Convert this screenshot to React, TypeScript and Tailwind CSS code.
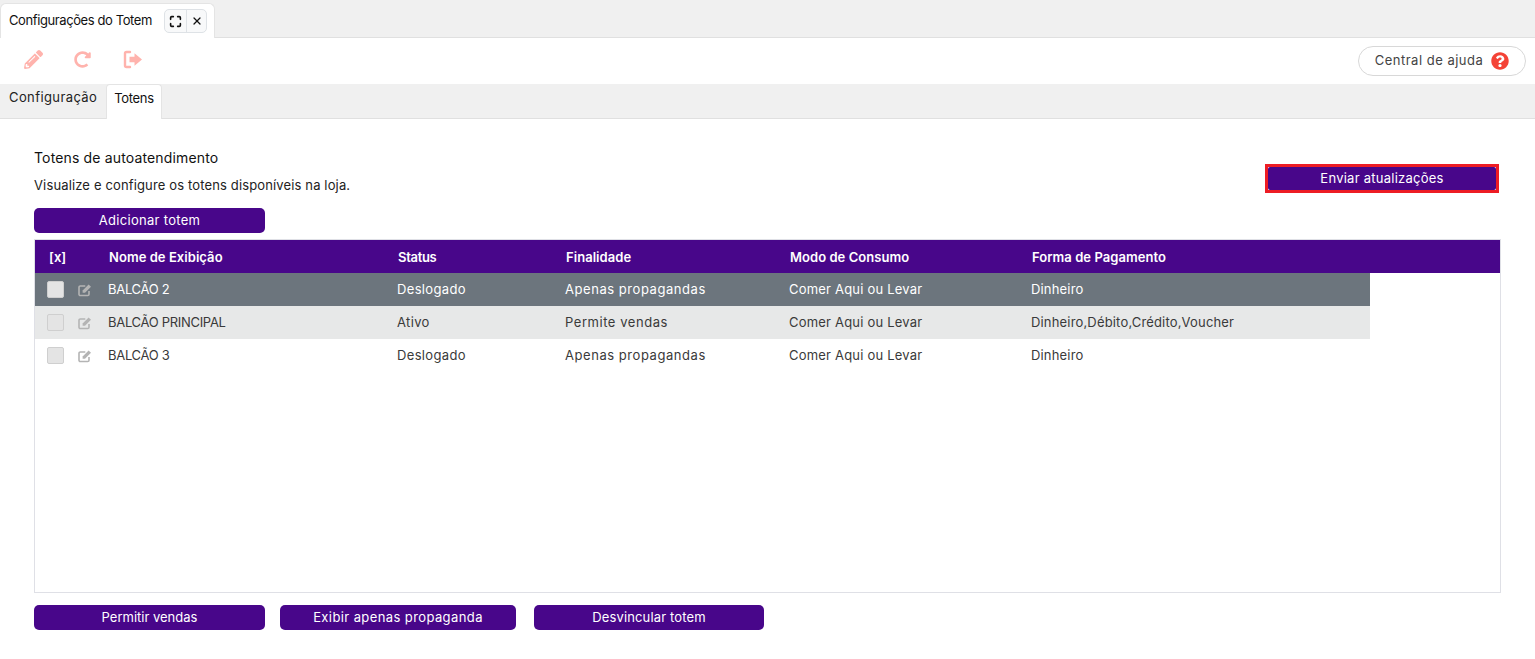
import { Maximize, X } from "lucide-react";
import { FaPencilAlt, FaQuestionCircle, FaRedoAlt } from "react-icons/fa";

const rows = [
  { name: "BALCÃO 2", status: "Deslogado", goal: "Apenas propagandas", mode: "Comer Aqui ou Levar", pay: "Dinheiro", cls: "bg-[#6c757d] text-white" },
  { name: "BALCÃO PRINCIPAL", status: "Ativo", goal: "Permite vendas", mode: "Comer Aqui ou Levar", pay: "Dinheiro,Débito,Crédito,Voucher", cls: "bg-[#e7e8e8] text-[#3a3a3a]" },
  { name: "BALCÃO 3", status: "Deslogado", goal: "Apenas propagandas", mode: "Comer Aqui ou Levar", pay: "Dinheiro", cls: "bg-white text-[#3a3a3a]" },
];

function EditIcon() {
  return (
    <svg width="14" height="14" viewBox="0 0 14 14" className="text-[#b4b4b4]" fill="currentColor">
      <path d="M11 8v3.2a1.3 1.3 0 0 1-1.3 1.3H2.3A1.3 1.3 0 0 1 1 11.2V4.3A1.3 1.3 0 0 1 2.3 3h5" fill="none" stroke="currentColor" strokeWidth="1.6" />
      <path d="M4.6 7.4 10.6 1.4l2.4 2.4-6 6H4.6z" />
    </svg>
  );
}

function ExitIcon() {
  return (
    <svg width="20" height="19" viewBox="0 0 20 19" fill="currentColor" className="ml-[32px]">
      <path d="M7 2H3.5A1.5 1.5 0 0 0 2 3.5v12A1.5 1.5 0 0 0 3.5 17H7" fill="none" stroke="currentColor" strokeWidth="2.4" strokeLinecap="round" />
      <path d="M6.5 6.7h5V3.2l7.5 6.3-7.5 6.3v-3.5h-5z" />
    </svg>
  );
}

function PurpleButton({ label, className }: { label: string; className: string }) {
  return (
    <button className={`${className} h-[25px] rounded-[5px] bg-[#48068a] text-[13px] text-white`}>
      {label}
    </button>
  );
}

export default function App() {
  return (
    <div className="h-[659px] overflow-hidden bg-white font-['Inter','Liberation_Sans',sans-serif] text-[13px] text-[#222]">
      <div className="flex h-[38px] items-end border-b border-[#e0e0e0] bg-[#f0f0f0]">
        <div className="mb-[-1px] flex h-[35px] w-[215px] items-center rounded-t-[6px] border border-b-0 border-[#e4e4e4] bg-white pl-2">
          <span className="w-[155px] text-[13px] tracking-[-0.4px] text-[#111]">Configurações do Totem</span>
          <div className="flex h-[24px] items-center rounded-[5px] border border-[#dee2e6] bg-[#f8f9fa]">
            <span className="flex h-full w-[22px] items-center justify-center border-r border-[#dee2e6]">
              <Maximize size={13} strokeWidth={3} className="text-[#111]" />
            </span>
            <span className="flex h-full w-[19px] items-center justify-center">
              <X size={12} strokeWidth={2.5} className="text-[#111]" />
            </span>
          </div>
        </div>
      </div>

      <div className="flex h-[46px] items-center bg-white pl-6 pr-[9px] pb-[3px] text-[#ffb3ad]">
        <FaPencilAlt size={19} />
        <FaRedoAlt size={17} className="ml-[31px]" />
        <ExitIcon />
        <button className="ml-auto mt-[3px] flex h-[30px] w-[168px] items-center justify-center gap-2 rounded-full border border-[#d8d8d8] bg-white text-[13px] tracking-[0.5px] text-[#444]">
          Central de ajuda
          <FaQuestionCircle size={18} className="text-[#f44336]" />
        </button>
      </div>

      <div className="flex h-[35px] items-end border-b border-[#e0e0e0] bg-[#f0f0f0] pl-[7px]">
        <div className="flex h-[34px] w-[99px] items-start pl-[2px] pt-[4px] text-[13px] tracking-[0.4px] text-[#222]">Configuração</div>
        <div className="mb-[-1px] flex h-[35px] w-[56px] items-start justify-center rounded-t-[4px] border border-b-0 border-[#e4e4e4] bg-white pt-[4px] text-[13px] tracking-[-0.3px] text-[#111]">Totens</div>
      </div>

      <div className="px-[34px] pt-[30px]">
        <div className="flex items-start justify-between">
          <div>
            <h2 className="h-[18px] text-[14px] leading-[18px] tracking-[0.15px] text-[#111]">Totens de autoatendimento</h2>
            <p className="mt-[9px] h-[18px] text-[13px] leading-[18px] tracking-[0.14px] text-[#222]">Visualize e configure os totens disponíveis na loja.</p>
          </div>
          <div className="mt-[15px] mr-[2px] border-[3px] border-[#ed1c24]">
            <PurpleButton label="Enviar atualizações" className="block !h-[23px] w-[228px] !rounded-[2px] tracking-[0.25px]" />
          </div>
        </div>

        <div className="mt-[14px]">
          <PurpleButton label="Adicionar totem" className="w-[231px] tracking-[0.3px]" />
        </div>

        <div className="mt-[6px] h-[354px] border border-[#dfe0e6]">
          <div className="flex h-[33px] items-center bg-[#48068a] pt-[2px] text-[13px] font-semibold tracking-[0.05px] text-white">
            <span className="w-[74px] pl-[14px]">[x]</span>
            <span className="w-[289px]">Nome de Exibição</span>
            <span className="w-[168px] tracking-[-0.3px]">Status</span>
            <span className="w-[224px]">Finalidade</span>
            <span className="w-[242px]">Modo de Consumo</span>
            <span>Forma de Pagamento</span>
          </div>
          {rows.map((row) => (
            <div key={row.name} className={`flex h-[33px] w-[1335px] items-center text-[13px] ${row.cls}`}>
              <span className="ml-[12px] h-[17px] w-[17px] rounded-[2px] border border-[#cfcfcf] bg-[#e4e4e4]" />
              <span className="ml-[14px] w-[30px]">
                <EditIcon />
              </span>
              <span className="w-[289px] tracking-[-0.3px]">{row.name}</span>
              <span className="w-[168px] tracking-[0.35px]">{row.status}</span>
              <span className="w-[224px] tracking-[0.55px]">{row.goal}</span>
              <span className="w-[242px] tracking-[0.2px]">{row.mode}</span>
              <span className="tracking-[0.17px]">{row.pay}</span>
            </div>
          ))}
        </div>

        <div className="mt-[12px] flex">
          <PurpleButton label="Permitir vendas" className="w-[231px]" />
          <div className="ml-[15px]"><PurpleButton label="Exibir apenas propaganda" className="w-[236px] tracking-[0.4px]" /></div>
          <div className="ml-[18px]"><PurpleButton label="Desvincular totem" className="w-[230px] tracking-[0.15px]" /></div>
        </div>
      </div>
    </div>
  );
}
